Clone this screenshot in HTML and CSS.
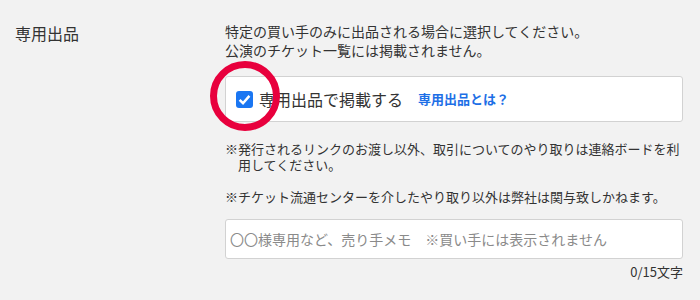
FILE: index.html
```html
<!DOCTYPE html>
<html lang="ja">
<head>
<meta charset="utf-8">
<link rel="stylesheet" href="styles.css">
</head>
<body>
<div class="row">
  <div class="label">専用出品</div>
  <div class="field">
    <p class="desc">特定の買い手のみに出品される場合に選択してください。<br>公演のチケット一覧には掲載されません。</p>
    <div class="card">
      <label class="check">
        <svg class="box" width="17" height="17" viewBox="0 0 17 17"><rect x="0" y="0" width="17" height="17" rx="3" fill="#1a76f2"/><path d="M3.6 8.8 L7 12.2 L13.4 4.9" fill="none" stroke="#fff" stroke-width="2.5" stroke-linecap="butt" stroke-linejoin="miter"/></svg>
        <span class="check-text">専用出品で掲載する</span>
      </label>
      <a class="link" href="#">専用出品とは？</a>
      <span class="ring"></span>
    </div>
    <p class="note">※発行されるリンクのお渡し以外、取引についてのやり取りは連絡ボードを利用してください。</p>
    <p class="note note2">※チケット流通センターを介したやり取り以外は弊社は関与致しかねます。</p>
    <input class="memo" type="text" placeholder="〇〇様専用など、売り手メモ　※買い手には表示されません">
    <div class="count">0/15文字</div>
  </div>
</div>
</body>
</html>
```

FILE: styles.css
```css
html, body {
  margin: 0;
  padding: 0;
  background: #f2f2f2;
}
body {
  font-family: "Noto Sans CJK JP", "Noto Sans", sans-serif;
  color: #333;
  width: 700px;
  height: 300px;
  overflow: hidden;
}
.row {
  display: flex;
  padding: 21px 0 0 15px;
}
.label {
  width: 210px;
  font-size: 16px;
  line-height: 24px;
}
.field {
  width: 458px;
  padding-top: 1px;
}
.desc {
  margin: 0;
  font-size: 14px;
  line-height: 19px;
}
.card {
  position: relative;
  margin-top: 16px;
  height: 44px;
  background: #fff;
  border: 1px solid #d2d2d2;
  border-radius: 3px;
  display: flex;
  align-items: center;
  padding-left: 10px;
}
.check {
  display: flex;
  align-items: center;
  gap: 6px;
}
.box {
  display: block;
}
.check-text {
  font-size: 16px;
  line-height: 20px;
}
.link {
  margin-left: 15px;
  font-size: 13px;
  font-weight: bold;
  color: #1d6fe6;
  text-decoration: none;
  line-height: 20px;
}
.ring {
  position: absolute;
  left: -16px;
  top: -16px;
  width: 70px;
  height: 70px;
  box-sizing: border-box;
  border: 7.5px solid #e8003d;
  border-radius: 50%;
  pointer-events: none;
}
.note {
  margin: 19px 0 0;
  font-size: 13px;
  line-height: 16px;
  padding-left: 1em;
  text-indent: -1em;
}
.note2 {
  margin-top: 16px;
}
.memo {
  display: block;
  box-sizing: border-box;
  width: 458px;
  height: 40px;
  margin: 14px 0 0;
  padding: 0 4px;
  border: 1px solid #d2d2d2;
  border-radius: 3px;
  background: #fff;
  font-family: "Noto Sans CJK JP", "Noto Sans", sans-serif;
  font-size: 14px;
  color: #333;
  outline: none;
}
.memo::placeholder {
  color: #8a8a8a;
}
.count {
  margin-top: 5px;
  text-align: right;
  font-size: 13px;
  line-height: 16px;
}
```
